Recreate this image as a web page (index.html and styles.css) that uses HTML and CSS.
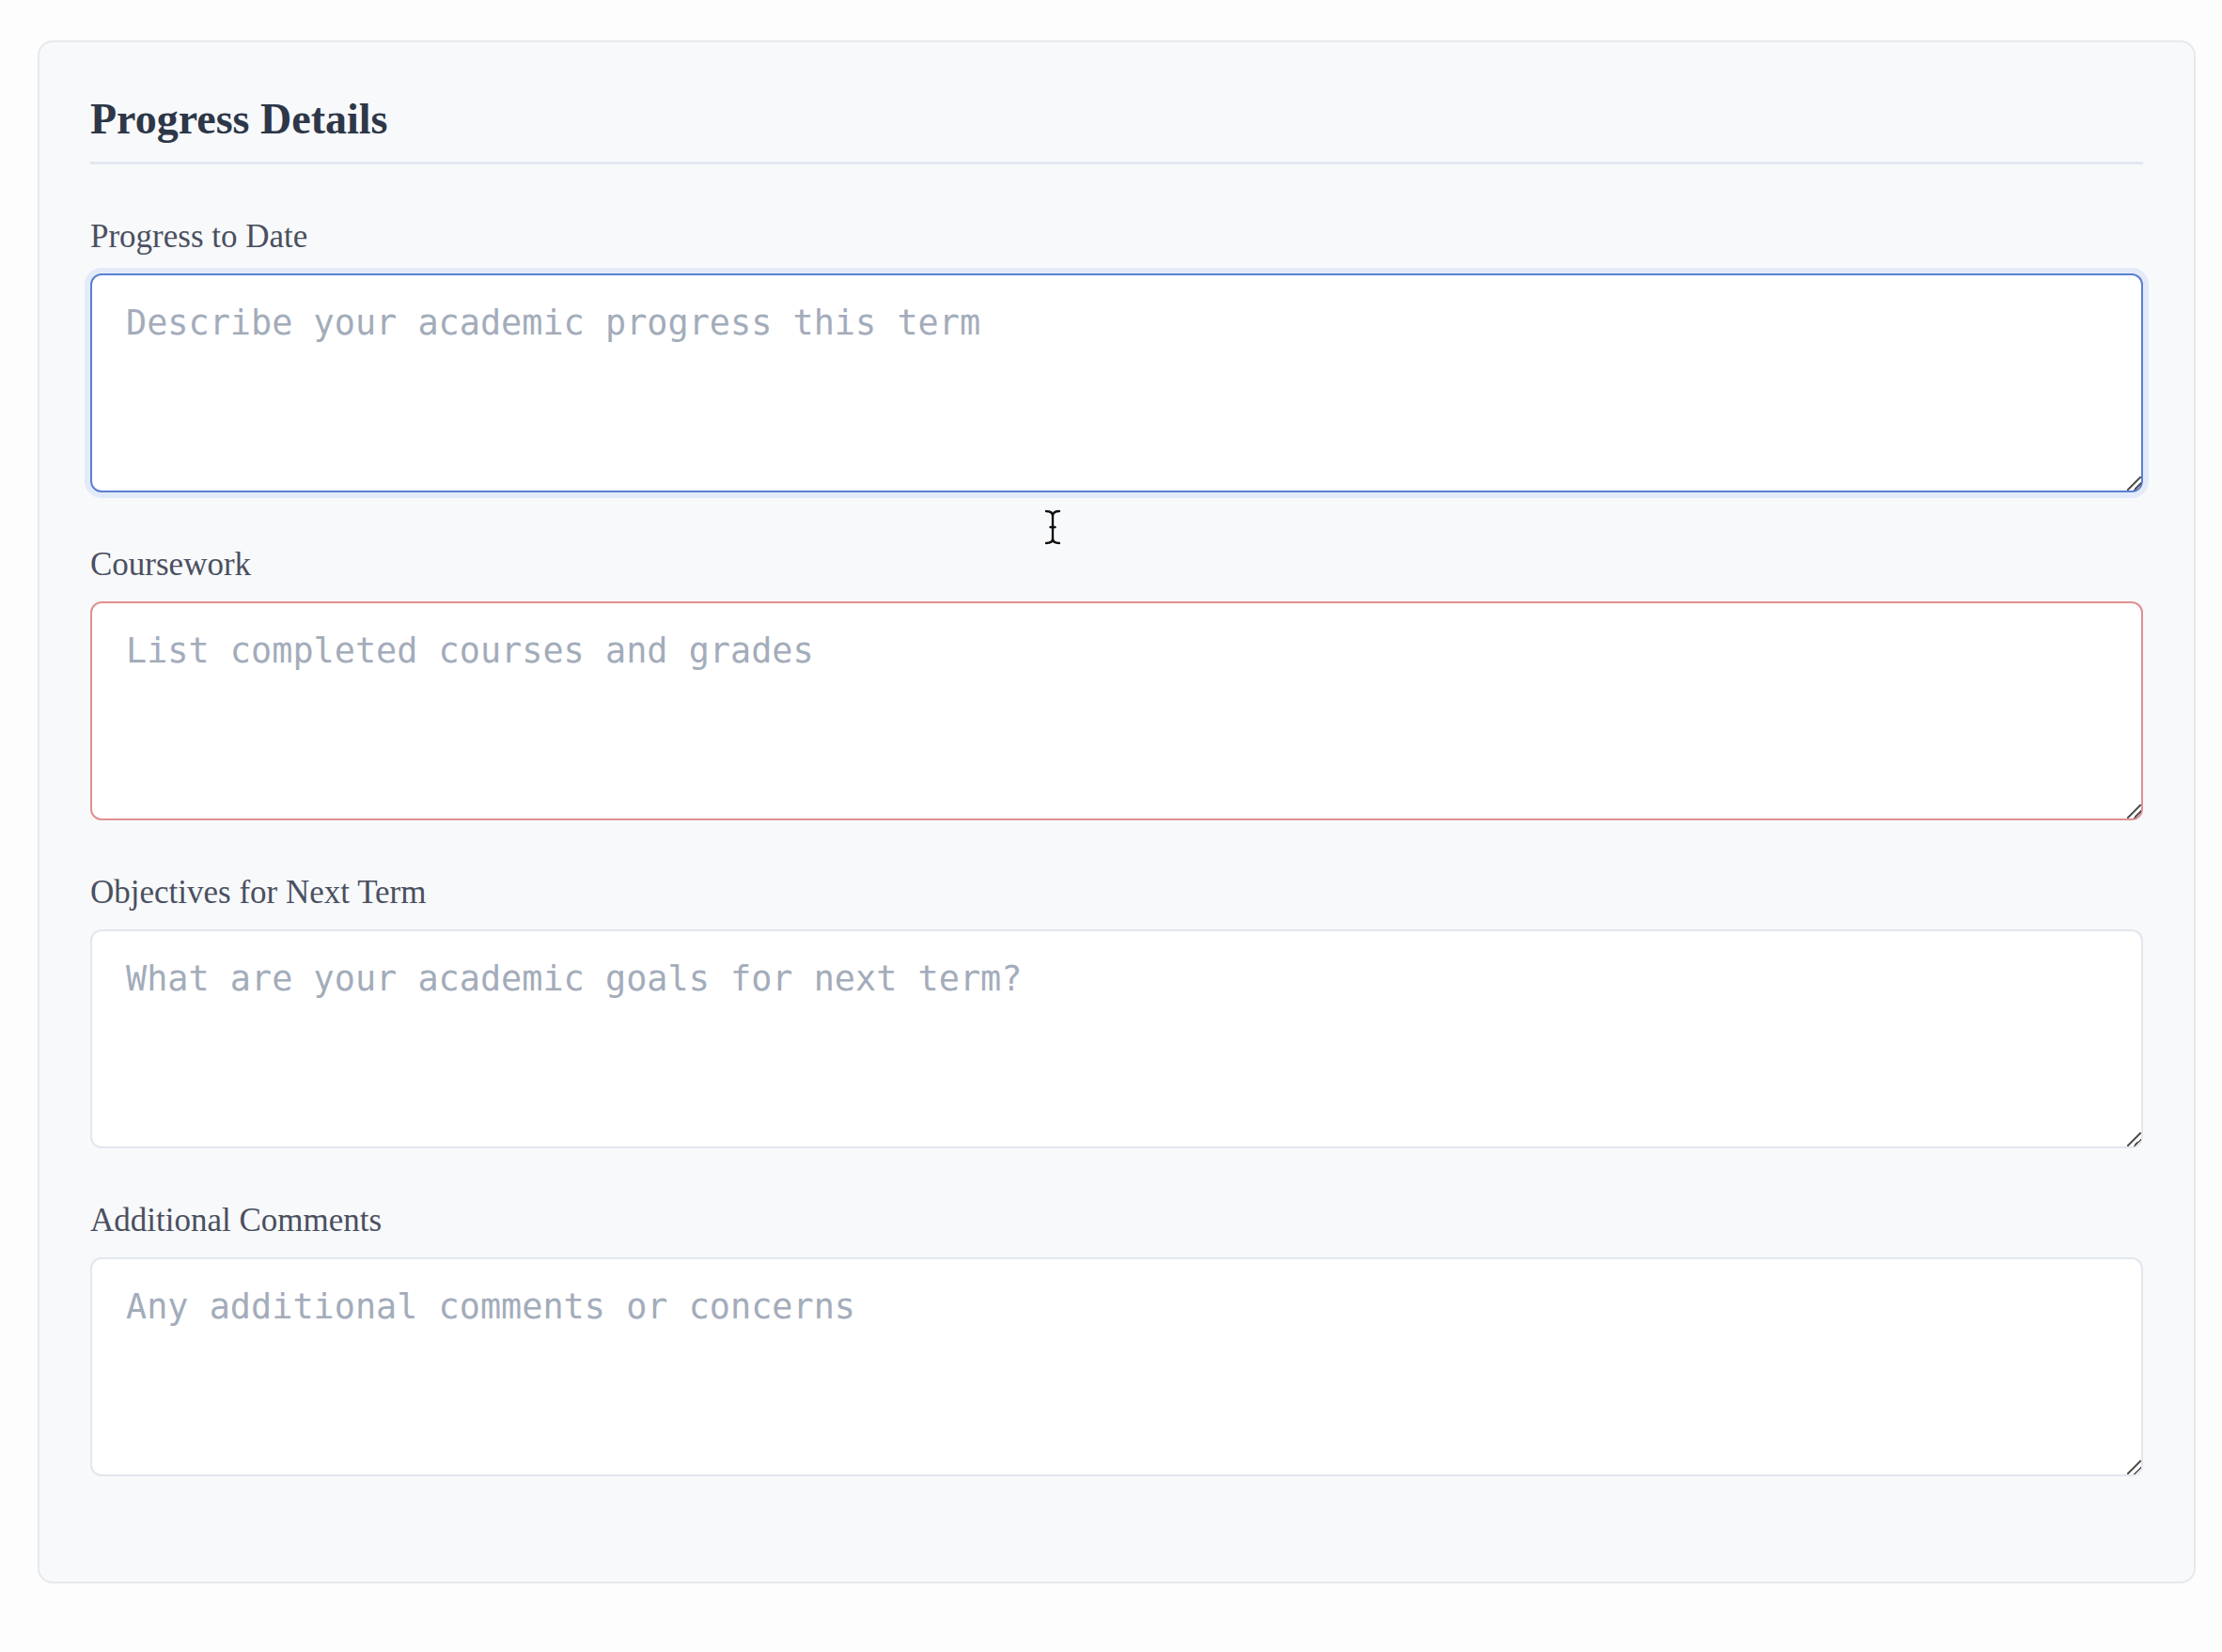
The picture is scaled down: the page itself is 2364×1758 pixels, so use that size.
FILE: index.html
```html
<!DOCTYPE html>
<html lang="en">
<head>
<meta charset="utf-8">
<title>Progress Details</title>
<link rel="stylesheet" href="styles.css">
</head>
<body>
<section class="card">
  <h2 class="card-title">Progress Details</h2>
  <div class="field">
    <label class="field-label" for="progress">Progress to Date</label>
    <textarea id="progress" class="field-input is-focused" placeholder="Describe your academic progress this term"></textarea>
  </div>
  <div class="field">
    <label class="field-label" for="coursework">Coursework</label>
    <textarea id="coursework" class="field-input is-invalid" placeholder="List completed courses and grades"></textarea>
  </div>
  <div class="field">
    <label class="field-label" for="objectives">Objectives for Next Term</label>
    <textarea id="objectives" class="field-input" placeholder="What are your academic goals for next term?"></textarea>
  </div>
  <div class="field">
    <label class="field-label" for="comments">Additional Comments</label>
    <textarea id="comments" class="field-input" placeholder="Any additional comments or concerns"></textarea>
  </div>
</section>
<svg class="mouse-cursor" width="20" height="40" viewBox="0 0 20 40" aria-hidden="true">
  <g fill="none" stroke="#fff" stroke-width="5" stroke-linecap="round">
    <path d="M3 3 Q10 3 10 8 Q10 3 17 3"/>
    <path d="M10 8 V32"/>
    <path d="M3 37 Q10 37 10 32 Q10 37 17 37"/>
  </g>
  <g fill="none" stroke="#111" stroke-width="2.4" stroke-linecap="round">
    <path d="M3 3 Q10 3 10 8 Q10 3 17 3"/>
    <path d="M10 8 V32"/>
    <path d="M3 37 Q10 37 10 32 Q10 37 17 37"/>
    <path d="M7.5 20 H12.5"/>
  </g>
</svg>
</body>
</html>
```
FILE: styles.css
```css
html, body {
  margin: 0;
  padding: 0;
  background: #fdfdfd;
}

body {
  position: relative;
  min-height: 1758px;
  font-family: "Liberation Serif", "Times New Roman", serif;
}

.card {
  margin: 43px 28px 0 40px;
  padding: 55px 54px 112px 54px;
  background: #f8f9fb;
  border: 2px solid #e6e8ee;
  border-radius: 16px;
}

.card-title {
  margin: 0;
  padding-bottom: 19px;
  border-bottom: 3px solid #e2e8f0;
  font-size: 46px;
  font-weight: 700;
  line-height: normal;
  color: #2d3748;
}

.field {
  display: flex;
  flex-direction: column;
  gap: 20px;
  margin-top: 57px;
}

.field-label {
  font-size: 35px;
  line-height: 39px;
  color: #4a5060;
}

.field-input {
  display: block;
  box-sizing: border-box;
  width: 100%;
  height: 233px;
  margin: 0;
  padding: 29px 36px 23px;
  background: #fff;
  border: 2px solid #e3e6ec;
  border-radius: 12px;
  font-family: "DejaVu Sans Mono", "Liberation Mono", monospace;
  font-size: 36.85px;
  line-height: normal;
  color: #2d3748;
  outline: none;
}

.field-input::placeholder {
  color: #a3acba;
}

.field-input::-webkit-scrollbar {
  width: 18px;
  height: 18px;
  background: transparent;
}

.field-input::-webkit-resizer {
  background: linear-gradient(135deg,
    transparent 0 46%,
    #5a5a5a 46% 55%,
    transparent 55% 70%,
    #5a5a5a 70% 79%,
    transparent 79%);
}

.field-input.is-focused {
  border-color: #5b80d2;
  box-shadow: 0 0 0 6px #e3ebf9;
}

.field-input.is-invalid {
  border-color: #e09090;
}

.mouse-cursor {
  position: absolute;
  left: 1110px;
  top: 541px;
}
```
